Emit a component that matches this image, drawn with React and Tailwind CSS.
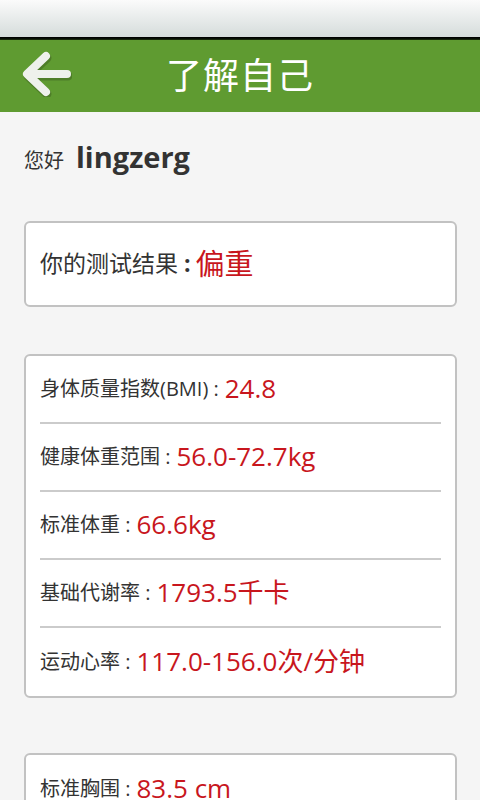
const rows = [
  { label: '身体质量指数(BMI)', value: '24.8' },
  { label: '健康体重范围', value: '56.0-72.7kg' },
  { label: '标准体重', value: '66.6kg' },
  { label: '基础代谢率', value: '1793.5千卡' },
  { label: '运动心率', value: '117.0-156.0次/分钟' },
]

const font = { fontFamily: '"Open Sans", "Noto Sans CJK SC", sans-serif' }

function Row({ label, value, last }) {
  return (
    <div className={`mx-[14px] flex h-[68px] items-center ${last ? '' : 'border-b-2 border-[#cbcbcb]'}`}>
      <span className="text-[20px] text-[#333]">{label}&nbsp;:</span>
      <span className="ml-[6px] text-[26px] text-[#c8161d]">{value}</span>
    </div>
  )
}

export default function App() {
  return (
    <div className="h-[800px] w-[480px] overflow-hidden bg-[#f5f5f5]" style={font}>
      {/* status bar */}
      <div className="h-[37px] bg-gradient-to-b from-[#fbfbfb] to-[#d5dcdb]" />
      <div className="h-[3px] bg-gradient-to-b from-[#000] to-[#1f3410]" />

      {/* title bar */}
      <div className="relative flex h-[72px] items-center justify-center bg-[#5f9b31]">
        <svg className="absolute left-[20px] top-[11px]" width="52" height="46" viewBox="0 0 52 46">
          <path d="M26 5 L7 23 L26 41 M8 23 L47 23" fill="none" stroke="#3a5a20" strokeOpacity="0.45" strokeWidth="9" strokeLinecap="round" strokeLinejoin="round" transform="translate(1 2)" />
          <path d="M26 5 L7 23 L26 41 M8 23 L47 23" fill="none" stroke="#eef1ec" strokeWidth="8" strokeLinecap="round" strokeLinejoin="round" />
        </svg>
        <h1 className="text-[36px] tracking-[1px] text-white">了解自己</h1>
      </div>

      <div className="flex flex-col pl-[24px] pr-[23px]">
        <div className="mt-[23px] flex items-baseline">
          <span className="text-[20px] text-[#333]">您好</span>
          <span className="ml-[12px] text-[29px] font-bold text-[#333]">lingzerg</span>
        </div>

        <div className="mt-[42px] flex h-[86px] shrink-0 items-center rounded-[6px] border-2 border-[#c2c2c2] bg-white px-[14px]">
          <span className="text-[23px] text-[#333]">你的测试结果 <b>:</b></span>
          <span className="ml-[5px] text-[29px] text-[#c8161d]">偏重</span>
        </div>

        <div className="mt-[47px] shrink-0 rounded-[6px] border-2 border-[#c2c2c2] bg-white">
          {rows.map((r, i) => (
            <Row key={r.label} {...r} last={i === rows.length - 1} />
          ))}
        </div>

        <div className="mt-[55px] shrink-0 rounded-[6px] border-2 border-[#c2c2c2] bg-white">
          <Row label="标准胸围" value="83.5 cm" last />
        </div>
      </div>
    </div>
  )
}
